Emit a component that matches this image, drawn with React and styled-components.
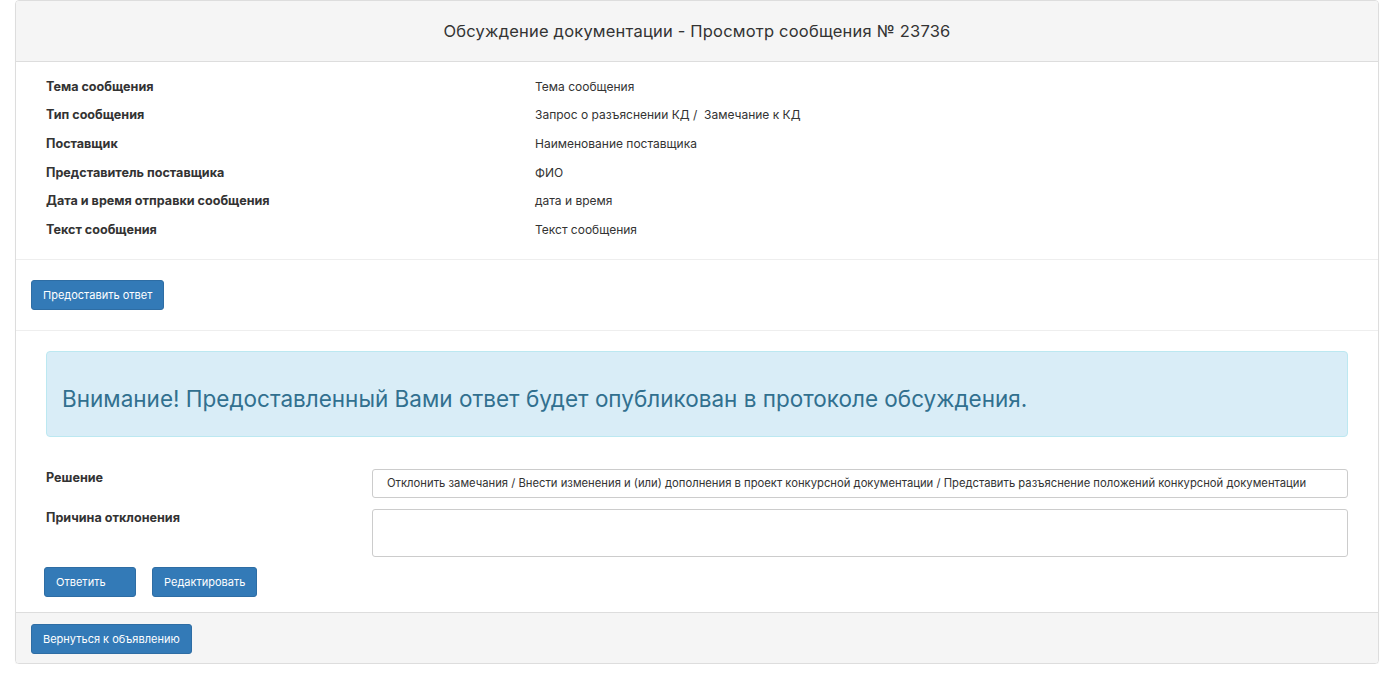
import React from "react";
import styled, { createGlobalStyle } from "styled-components";

const GlobalStyle = createGlobalStyle`
    body {
        margin: 0;
        font-family: Inter, "Noto Sans", sans-serif;
        color: #333333;
        background: #ffffff;
    }
`;

const Page = styled.div`
    padding: 0 15px;
`;

const Panel = styled.div`
    border: 1px solid #dddddd;
    border-radius: 4px;
    overflow: hidden;
    box-shadow: 0 1px 1px rgba(0, 0, 0, 0.05);
`;

const PanelHeading = styled.div`
    height: 60px;
    display: flex;
    align-items: center;
    justify-content: center;
    background-color: #f5f5f5;
    border-bottom: 1px solid #dddddd;
    font-size: 16.5px;
    letter-spacing: 0.2px;
    color: #333333;
`;

const Section = styled.div`
    padding: ${(p) => p.$pad || "0"};
    border-bottom: ${(p) => (p.$noBorder ? "none" : "1px solid #eeeeee")};
`;

const InfoGrid = styled.div`
    display: grid;
    grid-template-columns: 489px 1fr;
    grid-auto-rows: 28.6px;
    align-items: center;
`;

const Label = styled.div`
    font-size: 12.6px;
    font-weight: 700;
    color: #333333;
`;

const Value = styled.div`
    font-size: 12px;
    color: #333333;
    white-space: pre;
`;

const Button = styled.button`
    height: 30px;
    min-width: ${(p) => p.$minWidth || "0"};
    padding: 0 11px;
    text-align: left;
    font-family: Inter, "Noto Sans", sans-serif;
    font-size: 11px;
    color: #ffffff;
    background-color: #337ab7;
    border: 1px solid #2e6da4;
    border-radius: 3px;
    cursor: pointer;
`;

const Alert = styled.div`
    padding: 15px 15px;
    background-color: #d9edf7;
    border: 1px solid #bce8f1;
    border-radius: 4px;
    color: #31708f;
`;

const AlertTitle = styled.h3`
    margin: 20px 0 10px;
    font-size: 22.5px;
    font-weight: 400;
    line-height: 24px;
`;

const FormGrid = styled.div`
    display: grid;
    grid-template-columns: 326px 1fr;
    row-gap: 11px;
    margin-top: 32px;
`;

const FormLabel = styled(Label)`
    padding-top: 1px;
`;

const Select = styled.div`
    height: 29px;
    display: flex;
    align-items: center;
    padding: 0 14px;
    border: 1px solid #cccccc;
    border-radius: 3px;
    font-size: 11.25px;
    color: #333333;
    white-space: nowrap;
    overflow: hidden;
    box-sizing: border-box;
`;

const TextArea = styled.textarea`
    height: 48px;
    border: 1px solid #cccccc;
    border-radius: 3px;
    resize: none;
    box-sizing: border-box;
    display: block;
    width: 100%;
`;

const ButtonRow = styled.div`
    display: flex;
    gap: 16px;
    margin: 10px 0 0 -2px;
`;

const Footer = styled.div`
    padding: 11px 15px 9px;
    background-color: #f5f5f5;
    border-top: 1px solid #dddddd;
`;

const info = [
    ["Тема сообщения", "Тема сообщения"],
    ["Тип сообщения", "Запрос о разъяснении КД /  Замечание к КД"],
    ["Поставщик", "Наименование поставщика"],
    ["Представитель поставщика", "ФИО"],
    ["Дата и время отправки сообщения", "дата и время"],
    ["Текст сообщения", "Текст сообщения"],
];

export default function App() {
    return (
        <>
            <GlobalStyle />
            <Page>
                <Panel>
                    <PanelHeading>
                        Обсуждение документации - Просмотр сообщения № 23736
                    </PanelHeading>
                    <Section $pad="10px 30px 15px">
                        <InfoGrid>
                            {info.map(([label, value]) => (
                                <React.Fragment key={label}>
                                    <Label>{label}</Label>
                                    <Value>{value}</Value>
                                </React.Fragment>
                            ))}
                        </InfoGrid>
                    </Section>
                    <Section $pad="20px 15px 20px">
                        <Button>Предоставить ответ</Button>
                    </Section>
                    <Section $pad="20px 30px 15px" $noBorder>
                        <Alert>
                            <AlertTitle>
                                Внимание! Предоставленный Вами ответ будет
                                опубликован в протоколе обсуждения.
                            </AlertTitle>
                        </Alert>
                        <FormGrid>
                            <FormLabel>Решение</FormLabel>
                            <Select>
                                Отклонить замечания / Внести изменения и (или)
                                дополнения в проект конкурсной документации /
                                Представить разъяснение положений конкурсной
                                документации
                            </Select>
                            <FormLabel>Причина отклонения</FormLabel>
                            <TextArea />
                        </FormGrid>
                        <ButtonRow>
                            <Button $minWidth="92px">Ответить</Button>
                            <Button>Редактировать</Button>
                        </ButtonRow>
                    </Section>
                    <Footer>
                        <Button>Вернуться к объявлению</Button>
                    </Footer>
                </Panel>
            </Page>
        </>
    );
}
